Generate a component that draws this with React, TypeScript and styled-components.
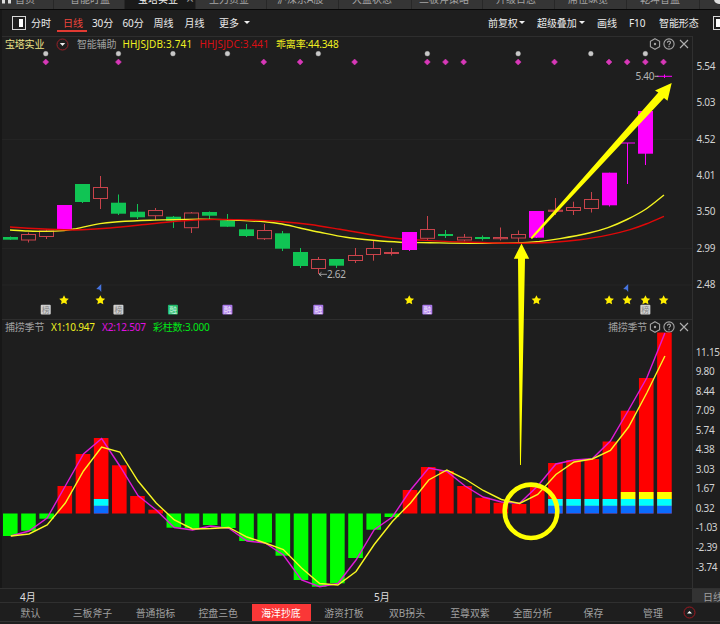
import React from "react";
import styled, { createGlobalStyle, css } from "styled-components";

const Global = createGlobalStyle`
  * { box-sizing: border-box; }
  body { margin: 0; background: #1e1e1e; overflow: hidden; }
`;

const Shell = styled.div`
  display: flex;
  flex-direction: column;
  width: 720px;
  height: 624px;
  overflow: hidden;
  background: #1e1e1e;
  color: #d6d6d6;
  font: 10px/14px "Noto Sans", "Noto Sans CJK SC", sans-serif;
  white-space: nowrap;
`;

const TopTabs = styled.div`
  display: flex;
  flex: 0 0 10px;
  overflow: hidden;
  background: #353535;
  border-bottom: 1px solid #080808;
`;
const TopTab = styled.div<{ $w: number; $pad: number; $active?: boolean }>`
  display: flex;
  align-items: center;
  flex: 0 0 ${(p) => p.$w}px;
  height: 21px;
  margin-top: -12px;
  padding-left: ${(p) => p.$pad}px;
  color: ${(p) => (p.$active ? "#f2f2f2" : "#a5a5a5")};
  background: ${(p) => (p.$active ? "#1a1a1a" : "#353535")};
  border-right: 1px solid #282828;
  svg { margin-right: 4px; }
`;
const CloseMark = styled.span`
  margin-left: 8px;
  color: #9a9a9a;
  font-size: 14px;
`;

const Toolbar = styled.div`
  display: flex;
  align-items: center;
  flex: 0 0 26px;
  padding: 0 0 1px 10px;
  border-left: 2px solid #171717;
`;
const PanelIcon = styled.span<{ $side: "left" | "right" }>`
  flex: 0 0 14px;
  height: 14px;
  margin-right: 5px;
  border: 1px solid #d8d8d8;
  display: flex;
  justify-content: ${(p) => (p.$side === "right" ? "flex-end" : "flex-start")};
  padding: 2px;
  &::after { content: ""; width: 4px; background: #fff; }
`;
const Tool = styled.span<{ $w: number; $active?: boolean }>`
  position: relative;
  display: flex;
  align-items: center;
  gap: 1px;
  flex: 0 0 ${(p) => p.$w}px;
  min-width: 0;
  height: 20px;
  color: #ececec;
  letter-spacing: -0.1px;
  ${(p) =>
    p.$active &&
    css`
      color: #f0453c;
      &::after {
        content: "";
        position: absolute;
        left: -6px;
        bottom: 1px;
        width: 30px;
        height: 1.5px;
        background: #e23a32;
      }
    `}
`;
const Caret = styled.i<{ $gap?: number }>`
  width: 0;
  height: 0;
  margin-left: ${(p) => p.$gap ?? 0}px;
  border: 3px solid transparent;
  border-top-color: #f0f0f0;
  border-bottom: 0;
`;
const Spring = styled.span`
  flex: 1;
`;

const Main = styled.div`
  position: relative;
  display: grid;
  grid-template-columns: 693px 27px;
  flex: 0 0 552px;
`;
const Panes = styled.div`
  display: flex;
  flex-direction: column;
  border-left: 2px solid #171717;
  border-right: 1px solid #303030;
`;
const Pane = styled.section<{ $h: number }>`
  display: flex;
  flex-direction: column;
  flex: 0 0 ${(p) => p.$h}px;
  border-top: 1px solid #2e2e2e;
`;
const PaneHead = styled.header`
  display: flex;
  align-items: center;
  flex: 0 0 14px;
  padding: 0 2px 0 3px;
  line-height: 13px;
`;
const Reading = styled.span<{ $w: number; $c: string; $ls?: number }>`
  flex: 0 0 ${(p) => p.$w}px;
  color: ${(p) => p.$c};
  letter-spacing: ${(p) => p.$ls ?? -0.2}px;
`;
const DropRing = styled.span`
  display: flex;
  flex: 0 0 21px;
  svg { display: block; }
`;
const HeadIcons = styled.span`
  display: flex;
  gap: 2.7px;
  margin-left: 1.5px;
  svg { display: block; }
`;
const Plot = styled.svg`
  display: block;
  flex: none;
  overflow: visible;
`;

const Axes = styled.div`
  display: flex;
  flex-direction: column;
`;
const Scale = styled.div<{ $h: number; $top: number; $step: number; $left: number }>`
  display: flex;
  flex-direction: column;
  flex: 0 0 ${(p) => p.$h}px;
  padding: ${(p) => p.$top}px 0 0 ${(p) => p.$left}px;
  span {
    flex: 0 0 ${(p) => p.$step}px;
    line-height: ${(p) => p.$step}px;
    letter-spacing: -0.3px;
    color: #d2d2d2;
  }
`;
const Overlay = styled.svg`
  position: absolute;
  left: 0;
  top: 0;
  pointer-events: none;
`;

const DateRow = styled.div`
  display: grid;
  grid-template-columns: 20px 354px 318px 28px;
  flex: 0 0 15px;
  border-top: 1px solid #303030;
  border-bottom: 1px solid #303030;
  line-height: 13px;
  color: #dedede;
  span { padding-top: 1px; height: 13px; line-height: 14px; }
`;
const PeriodCell = styled.span`
  background: #333;
  color: #a0a0a0;
  padding-left: 11px;
`;

const BottomTabs = styled.nav`
  display: flex;
  flex: 0 0 19px;
  align-items: center;
  border-bottom: 1px solid #333;
`;
const BottomTab = styled.span<{ $w: number; $active?: boolean }>`
  flex: 0 0 ${(p) => p.$w}px;
  display: flex;
  justify-content: center;
  color: ${(p) => (p.$active ? "#fff" : "#a0a0a0")};
  font-size: 9.9px;
  b {
    width: 59px;
    height: 17px;
    line-height: 18px;
    text-align: center;
    font-weight: 400;
    background: ${(p) => (p.$active ? "#fa3737" : "transparent")};
  }
`;

const cx = (i: number) => 10.2 + 18.17 * i;

type Kind = "g" | "r" | "m";
/* kind, body top, body bottom, wick top, wick bottom */
const candles: [Kind, number, number, number, number][] = [
  ["g", 237, 239.7, 236.5, 240], ["r", 234.5, 240, 232.5, 242.5], ["r", 231, 236.5, 229.5, 239],
  ["m", 205, 230, 205, 230], ["g", 184, 202, 184, 203], ["r", 187.5, 198.5, 176, 209],
  ["g", 202.7, 213.7, 194.5, 215], ["g", 211.7, 217.3, 204, 219], ["r", 210.5, 215.7, 208, 220],
  ["g", 216.7, 220.7, 216, 228], ["r", 213, 227.7, 212, 233], ["g", 212, 215.7, 211.5, 219],
  ["g", 220.5, 226.7, 214, 227], ["g", 229.3, 236, 224, 237], ["r", 230.5, 238.7, 224, 240],
  ["g", 233.3, 248.7, 231, 251], ["g", 252, 266, 248, 268], ["r", 259.5, 268.5, 257, 274],
  ["g", 259, 265.7, 259, 268], ["r", 255.5, 260.5, 248, 263], ["r", 248.5, 254.5, 240, 260.7],
  ["r", 252.5, 253.5, 248, 255.5], ["m", 232, 250, 232, 251], ["r", 229.5, 238.3, 216, 240],
  ["g", 234, 236, 230, 238], ["r", 237.3, 240, 234, 241.5], ["g", 237, 239, 235.5, 240.5],
  ["r", 237.5, 238.7, 227.5, 240.5], ["r", 234.5, 238, 230.5, 242], ["m", 211, 237.7, 211, 238],
  ["r", 210.2, 211.3, 198, 215], ["r", 207.5, 210.5, 201.7, 215], ["r", 199.5, 208.5, 192, 212.5],
  ["m", 172.7, 205.3, 172.7, 206.5], ["m", 142.5, 143.5, 143, 184], ["m", 111, 153.7, 111, 165],
  ["m", 75.8, 76.8, 74.5, 78],
];
const fills: Record<Kind, string> = { g: "#10c454", r: "#c9434b", m: "#ff00ff" };

const levels = [
  536, 530.7, 518.7, 486, 454, 438, 465.3, 496, 509.7, 527.7, 528.3, 525, 528, 541, 542.7, 555.7,
  580, 586.7, 583.3, 558, 529.7, 517, 490, 467, 471, 486, 497.7, 502.7, 504, 487, 463, 460, 459,
  441.5, 410.7, 378, 332.5,
];
const fast = [
  536, 531, 518, 486, 454, 438.5, 466, 495.5, 510, 527.5, 530, 526, 528.3, 541, 543, 555, 580,
  586.7, 583.5, 560, 529.7, 517, 490, 468, 471.5, 486, 497, 502, 503.3, 486, 464, 460, 458.7, 441,
  410, 378, 333,
];
const slow = [
  536, 534, 525, 503, 471, 447, 452, 481, 503, 520, 529, 528.5, 527.5, 537, 543, 549.5, 568, 583.5,
  585, 571.5, 544.5, 521.5, 503, 480, 470, 479, 490.5, 499.5, 503.5, 494.5, 474.5, 462, 459, 450.5,
  427, 393, 356,
];
const ZERO = 513.5;

const smooth = (pts: number[][]) =>
  pts.reduce((d, [x, y], k) => {
    if (k === 0) return `M${x} ${y}`;
    const p0 = pts[Math.max(0, k - 2)], p1 = pts[k - 1], p3 = pts[Math.min(pts.length - 1, k + 1)];
    return `${d} C${p1[0] + (x - p0[0]) / 6} ${p1[1] + (y - p0[1]) / 6} ${x - (p3[0] - p1[0]) / 6} ${y - (p3[1] - p1[1]) / 6} ${x} ${y}`;
  }, "");

const yellowMA = smooth([
  [10, 230], [28, 231], [46, 231.4], [64, 230.6], [74, 229], [100, 223.6], [118, 221.8], [150, 220.3],
  [200, 219.1], [240, 220.4], [265, 221.8], [282, 224], [300, 228], [320, 232.3], [346, 237.3],
  [373, 240.3], [400, 242.2], [430, 242.7], [470, 243.2], [518, 243], [540, 241.4], [560, 238.6],
  [590, 232.7], [608, 227.6], [627, 219.5], [646, 209], [664, 195],
]);
const redMA = smooth([
  [10, 227], [28, 228.2], [64, 229.8], [82, 229.8], [110, 228], [150, 224], [180, 221], [220, 219.4],
  [250, 220], [282, 221.7], [310, 224.5], [340, 229.3], [373, 235], [400, 238.7], [430, 240.6],
  [470, 242.2], [518, 243.3], [550, 242.5], [580, 239.8], [610, 234.6], [630, 229.6], [646, 224], [664, 216.3],
]);
const joined = (v: number[]) => v.map((y, i) => `${cx(i) + 0.6},${y}`).join(" ");

const greyDots = [2, 6, 9, 12, 17, 23, 28, 32, 35];
const pinkDots = [2, 6, 14, 16, 19, 23, 24, 25, 28, 30, 33, 34, 35, 36];
const stars = [3, 5, 22, 29, 33, 34, 35, 36];
const badges: [number, string, string, string][] = [
  [2, "#d0d0d0", "#858585", "榜"], [6, "#d0d0d0", "#858585", "榜"], [9, "#20b868", "#d0f8e0", "融"],
  [12, "#a878e8", "#f4eaff", "融"], [17, "#a878e8", "#f4eaff", "融"], [23, "#a878e8", "#f4eaff", "融"],
  [35, "#d0d0d0", "#858585", "榜"],
];

function Candle({ i }: { i: number }) {
  const [k, t, b, wt, wb] = candles[i];
  const x = Math.max(10, Math.floor(cx(i) - 0.3));
  const c = fills[k];
  if (k === "r")
    return (
      <g stroke={c} strokeWidth="1" fill="none">
        <path d={`M${x + 0.5} ${wt}V${t}M${x + 0.5} ${b}V${wb}`} />
        <rect x={x - 6.5} y={t} width="14" height={b - t} />
      </g>
    );
  return (
    <g fill={c}>
      <rect x={x} y={wt} width="1" height={wb - wt} />
      <rect x={x - 7} y={t} width={15} height={b - t} />
    </g>
  );
}

function PricePlot() {
  return (
    <Plot width="690" height="268" viewBox="2 51 690 268">
      <path d="M2 139.5H692M2 248.5H692M2 285H692" stroke="#242424" />
      {greyDots.map((i) => (
        <circle key={i} cx={cx(i) - 0.8} cy="53.7" r="2.4" fill="#c8c8c8" stroke="#c8c8c8" strokeOpacity=".3" />
      ))}
      {pinkDots.map((i) => (
        <path key={i} d={`M${cx(i) - 0.8} 59l3 3-3 3-3-3z`} fill="#d838b8" stroke="#d838b8" strokeOpacity=".45" />
      ))}
      {candles.map((_, i) => <Candle key={i} i={i} />)}
      <path d={yellowMA} fill="none" stroke="#f4f420" strokeWidth="1.4" />
      <path d={redMA} fill="none" stroke="#e00808" strokeWidth="1.4" />
      <rect x={402} y={232} width="15" height="18" fill="#f0f" />
      <path d="M319 274.3h8M321.5 272.3l-2.5 2 2.5 2" fill="none" stroke="#aaa" strokeWidth=".9" />
      <text x="327" y="278" fontSize="10" fill="#b4b4b4" textLength="19">2.62</text>
      <text x="635.5" y="80" fontSize="10" fill="#b4b4b4" textLength="19">5.40</text>
      <path d="M654.5 76.3h4" stroke="#b4b4b4" />
      {stars.map((i) => (
        <path
          key={i}
          transform={`translate(${cx(i) - 0.7} 299.9)`}
          d="M0-4.7 1.5-1.6 4.8-1.2 2.4 1.1 3 4.4 0 2.8-3 4.4-2.4 1.1-4.8-1.2-1.5-1.6z"
          fill="#ffee00"
        />
      ))}
      {[5, 34].map((i) => (
        <path key={i} d={`M${cx(i) - 4.8} 289l5-5v8l-2-2.4z`} fill="#4674e0" />
      ))}
      {badges.map(([i, bg, fg, t]) => (
        <g key={i}>
          <rect x={cx(i) - 5.8} y="304.7" width="10" height="9.8" rx="1" fill={bg} />
          <text x={cx(i) - 0.8} y="312.7" fontSize="8" textAnchor="middle" fill={fg}>{t}</text>
        </g>
      ))}
    </Plot>
  );
}

function SeasonPlot() {
  return (
    <Plot width="690" height="254" viewBox="2 334 690 254">
      {levels.map((y, i) => (
        <rect
          key={i}
          x={cx(i) - 7.2}
          y={Math.min(y, ZERO)}
          width="14.6"
          height={Math.abs(y - ZERO)}
          fill={y < ZERO ? "#ff0000" : "#00ff00"}
        />
      ))}
      {[5, 30, 31, 32, 33, 34, 35, 36].map((i) => (
        <g key={i}>
          <rect x={cx(i) - 7.2} y="505.7" width="14.6" height="7.8" fill="#0a6cff" />
          <rect x={cx(i) - 7.2} y="499" width="14.6" height="6.8" fill="#00ffff" />
          {i > 33 && <rect x={cx(i) - 7.2} y="492" width="14.6" height="7" fill="#ffff00" />}
        </g>
      ))}
      <polyline points={joined(fast)} fill="none" stroke="#e01ad8" strokeWidth="1.4" />
      <polyline points={joined(slow)} fill="none" stroke="#f8f820" strokeWidth="1.4" />
    </Plot>
  );
}

function WindowIcons() {
  return (
    <HeadIcons>
      <svg width="12" height="12" viewBox="0 0 12 12" fill="none" stroke="#a4a4a4" strokeWidth="1.1">
        <path d="M6 .7l4.6 2.6v5.4L6 11.3 1.4 8.7V3.3z" />
        <circle cx="6" cy="6" r="1.2" fill="#a4a4a4" stroke="none" />
      </svg>
      <svg width="12" height="12" viewBox="0 0 12 12" fill="none" stroke="#a4a4a4" strokeWidth="1.1">
        <circle cx="6" cy="6" r="5.1" />
        <path d="M4.4 4.8C4.5 2.6 7.6 2.7 7.5 4.6 7.4 5.6 6 5.8 6 7.2M6 8.1v1.1" />
      </svg>
      <svg width="12" height="12" viewBox="0 0 12 12" fill="none" stroke="#b0b0b0" strokeWidth="1.1">
        <path d="M2 2l8 8M10 2l-8 8" />
      </svg>
    </HeadIcons>
  );
}

const topTabs: [string, number, number][] = [
  ["主力资金", 71, 13], ["沪深京A股", 72, 10], ["大盘状态", 73, 13], ["三板斧策略", 71, 7],
  ["升级日志", 72, 13], ["席位纵览", 72, 13], ["乾坤智盘", 73, 13],
];
const bottomTabs: [string, number][] = [
  ["默认", 61], ["三板斧子", 63], ["普通指标", 63], ["控盘三色", 62.5], ["海洋抄底", 63], ["游资打板", 63],
  ["双B拐头", 63], ["至尊双紫", 63], ["全面分析", 62], ["保存", 60], ["管理", 59],
];

export default function App() {
  return (
    <Shell>
      <Global />
      <TopTabs>
        <TopTab $w={54} $pad={2}>
          <svg width="9" height="10" viewBox="0 0 9 10"><path d="M4.5 0L9 4v5.5H6V6H3v3.5H0V4z" fill="#ddd" /></svg>
          首页
        </TopTab>
        <TopTab $w={71} $pad={16}>智能盯盘</TopTab>
        <TopTab $w={71} $pad={13} $active>宝塔实业<CloseMark>×</CloseMark></TopTab>
        {topTabs.map(([t, w, pad]) => <TopTab key={t} $w={w} $pad={pad}>{t}</TopTab>)}
        <TopTab $w={24} $pad={13}>
          <svg width="12" height="12" viewBox="0 0 12 12"><circle cx="6" cy="6" r="5" fill="#ddd" /></svg>
        </TopTab>
      </TopTabs>

      <Toolbar>
        <PanelIcon $side="right" />
        <Tool $w={32}>分时</Tool>
        <Tool $w={29} $active>日线</Tool>
        <Tool $w={30.5}>30分</Tool>
        <Tool $w={31}>60分</Tool>
        <Tool $w={31}>周线</Tool>
        <Tool $w={34.5}>月线</Tool>
        <Tool $w={40}>更多<Caret $gap={4} /></Tool>
        <Spring />
        <Tool $w={49}>前复权<Caret /></Tool>
        <Tool $w={60}>超级叠加<Caret $gap={1} /></Tool>
        <Tool $w={32}>画线</Tool>
        <Tool $w={30}>F10</Tool>
        <Tool $w={54}>智能形态</Tool>
        <Tool $w={7}><PanelIcon $side="left" /></Tool>
      </Toolbar>

      <Main>
        <Panes>
          <Pane $h={283}>
            <PaneHead>
              <Reading $w={51} $c="#efe58a">宝塔实业</Reading>
              <DropRing>
                <svg width="13" height="13" viewBox="0 0 13 13">
                  <circle cx="6.5" cy="6.5" r="5.5" fill="none" stroke="#9a2028" />
                  <path d="M3.8 5h5.4L6.5 8z" fill="#eee" />
                </svg>
              </DropRing>
              <Reading $w={45.5} $c="#a0a0a0">智能辅助</Reading>
              <Reading $w={77} $c="#f0f020" $ls={0.15}>HHJSJDB:3.741</Reading>
              <Reading $w={76.5} $c="#d80f14" $ls={0.15}>HHJSJDC:3.441</Reading>
              <Reading $w={65} $c="#f0f020" $ls={-0.15}>乖离率:44.348</Reading>
              <Spring />
              <WindowIcons />
            </PaneHead>
            <PricePlot />
          </Pane>
          <Pane $h={269}>
            <PaneHead>
              <Reading $w={46} $c="#a0a0a0">捕捞季节</Reading>
              <Reading $w={51} $c="#f0f020">X1:10.947</Reading>
              <Reading $w={51} $c="#e010e0">X2:12.507</Reading>
              <Reading $w={65} $c="#00e818">彩柱数:3.000</Reading>
              <Spring />
              <Reading $w={39} $c="#a0a0a0">捕捞季节</Reading>
              <WindowIcons />
            </PaneHead>
            <SeasonPlot />
          </Pane>
        </Panes>
        <Axes>
          <Scale $h={283} $top={12} $step={36.33} $left={3.5}>
            {["5.54", "5.03", "4.52", "4.01", "3.50", "2.99", "2.48"].map((v) => <span key={v}>{v}</span>)}
          </Scale>
          <Scale $h={269} $top={23.7} $step={19.53} $left={2.7}>
            {["11.15", "9.80", "8.44", "7.09", "5.74", "4.38", "3.03", "1.67", "0.32", "-1.03", "-2.39", "-3.74"].map((v) => (
              <span key={v}>{v}</span>
            ))}
          </Scale>
        </Axes>
        <Overlay width="720" height="552" viewBox="0 36 720 552">
          <path d="M530.5 237.8L658.3 92.5 655 90.5 671.7 83 667.5 100.7 664 98 532 239z" fill="#ffff00" />
          <path d="M521.5 243.5L529.2 258.7H525L520.9 465H520L518 258.7H513.8z" fill="#ffff00" />
          <ellipse cx="531" cy="511.3" rx="26.3" ry="26.7" fill="none" stroke="#ffff00" strokeWidth="4.6" />
        </Overlay>
      </Main>

      <DateRow>
        <span />
        <span>4月</span>
        <span>5月</span>
        <PeriodCell>日线</PeriodCell>
      </DateRow>
      <BottomTabs>
        {bottomTabs.map(([t, w]) => (
          <BottomTab key={t} $w={w} $active={t === "海洋抄底"}><b>{t}</b></BottomTab>
        ))}
        <svg width="13" height="13" viewBox="0 0 13 13">
          <circle cx="6.5" cy="6.5" r="5.5" fill="none" stroke="#a01820" />
          <path d="M4 7.6h5L6.5 5z" fill="#fff" />
        </svg>
      </BottomTabs>
    </Shell>
  );
}
